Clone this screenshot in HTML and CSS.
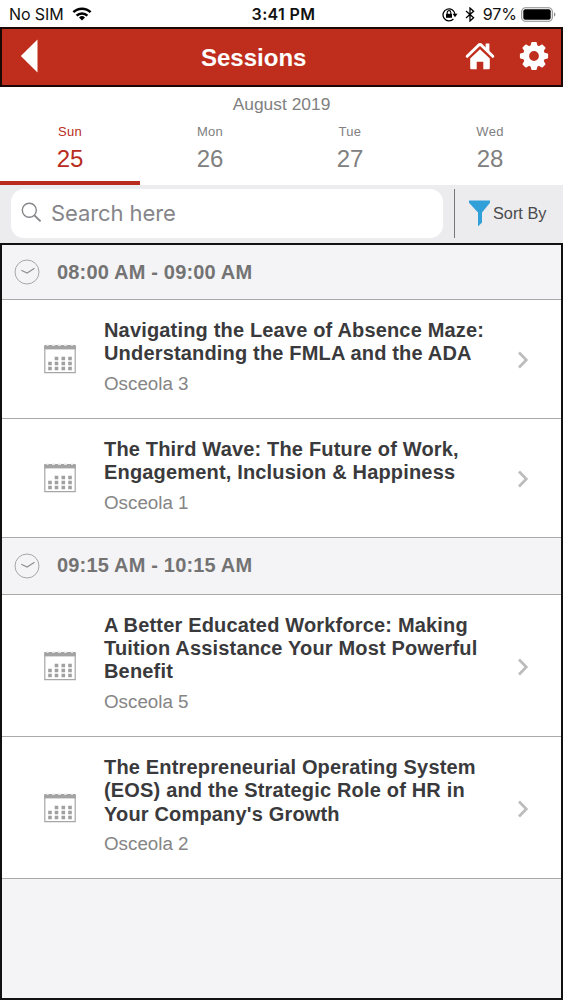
FILE: index.html
```html
<!DOCTYPE html>
<html lang="en">
<head>
    <meta charset="UTF-8">
    <meta name="viewport" content="width=device-width, initial-scale=1.0">
    <title>Sessions</title>
    <link rel="stylesheet" href="styles.css">
</head>
<body>
    <!-- shared icons -->
    <svg class="hidden">
        <symbol id="icon-clock" viewBox="0 0 26 26">
            <circle cx="13" cy="13" r="12" fill="none" stroke="#a6a6a6" stroke-width="1"/>
            <path d="M7.3 11.2l5.8 2.8 7.4-4.8" fill="none" stroke="#8f8f8f" stroke-width="1.2"/>
        </symbol>
        <symbol id="icon-calendar" viewBox="0 0 32 30">
            <path d="M.8 2v26.7h30.4V2" fill="none" stroke="#a6a6a6" stroke-width="1.2"/>
            <path d="M.3 1h31.4v4.4H.3z" fill="#a3a3a3"/>
            <path d="M2.5 1.2h2M8 1.2h3M14 1.2h3M20 1.2h3M27 1.2h2" stroke="#e4e4e4" stroke-width="1.6"/>
            <path d="M10.7 12.7h3.6v3.6h-3.6zM17.5 12.7h3.6v3.6h-3.6zM24.2 12.7h3.6v3.6h-3.6zM4.2 17.7h3.6v3.6H4.2zM10.7 17.7h3.6v3.6h-3.6zM17.5 17.7h3.6v3.6h-3.6zM24.2 17.7h3.6v3.6h-3.6zM4.2 22.7h3.6v3.6H4.2zM10.7 22.7h3.6v3.6h-3.6zM17.5 22.7h3.6v3.6h-3.6zM24.2 22.7h3.6v3.6h-3.6z" fill="#a0a0a0"/>
        </symbol>
        <symbol id="icon-arrow" viewBox="0 0 12 18">
            <path d="M2 1.5L9.3 9 2 16.5" fill="none" stroke="#bcbcbc" stroke-width="2.7"/>
        </symbol>
    </svg>

    <div class="statusbar">
        <div class="carrier">
            <span>No SIM</span>
            <svg width="20" height="14" viewBox="0 0 20 14">
                <g fill="none" stroke="#000" stroke-width="2.5">
                    <path d="M1.4 5.2a12.2 12.2 0 0 1 17.2 0"/>
                    <path d="M4.6 8.6a7.7 7.7 0 0 1 10.8 0"/>
                </g>
                <path d="M10 13.6l-3-3.1a4.3 4.3 0 0 1 6 0z"/>
            </svg>
        </div>
        <div class="time">3:41 PM</div>
        <div class="status-right">
            <svg class="lock" width="16" height="15" viewBox="0 0 16 15">
                <path d="M11.4 12A6 6 0 1 1 13 7.2" fill="none" stroke="#000" stroke-width="1.3"/>
                <path d="M10.6 6.8h4.9L13 10.2z"/>
                <path d="M4 6.8h6v4H4z"/>
                <path d="M5.2 7V5.4a1.8 1.8 0 0 1 3.6 0V7" fill="none" stroke="#000" stroke-width="1.1"/>
            </svg>
            <svg class="bluetooth" width="10" height="15" viewBox="0 0 10 15">
                <path d="M1 4l7.6 6.8L5 14V1l3.6 3.2L1 11" fill="none" stroke="#000" stroke-width="1.3"/>
            </svg>
            <span>97%</span>
            <svg class="battery" width="35" height="15" viewBox="0 0 35 15">
                <rect x=".7" y=".7" width="30.6" height="13.6" rx="3.8" fill="none" stroke="#8a8a8a" stroke-width="1.1"/>
                <rect x="2.3" y="2.3" width="27.4" height="10.4" rx="2"/>
                <path d="M33 5.2a2.6 2.6 0 0 1 0 4.6z" fill="#8a8a8a"/>
            </svg>
        </div>
    </div>

    <div class="navbar">
        <svg class="back" width="18" height="34" viewBox="0 0 18 34">
            <path d="M17.5 .5v33L.8 17z" fill="#fff"/>
        </svg>
        <div class="title">Sessions</div>
        <div class="menu">
            <svg width="30" height="28" viewBox="0 0 30 28">
                <path d="M2.2 14.3L13.6 3.2q1.4-1.2 2.8 0l11.4 11.1" fill="none" stroke="#fff" stroke-width="3" stroke-linecap="round" stroke-linejoin="round"/>
                <path d="M20.6 1.6h3.8v9l-3.8-3.6z" fill="#fff"/>
                <path d="M15 7.2l9.8 9.4V26q0 1.3-1.3 1.3h-5.2v-7.6h-6.6v7.6H6.5q-1.3 0-1.3-1.3v-9.4z" fill="#fff"/>
            </svg>
            <svg width="30" height="30" viewBox="-15 -15 30 30">
                <g fill="#fff">
                    <path id="tooth" d="M-3.8-9l1.2-4.5q.2-.6.8-.6h3.6q.6 0 .8.6L3.8-9z"/>
                    <use href="#tooth" transform="rotate(45)"/>
                    <use href="#tooth" transform="rotate(90)"/>
                    <use href="#tooth" transform="rotate(135)"/>
                    <use href="#tooth" transform="rotate(180)"/>
                    <use href="#tooth" transform="rotate(225)"/>
                    <use href="#tooth" transform="rotate(270)"/>
                    <use href="#tooth" transform="rotate(315)"/>
                </g>
                <circle r="7.9" fill="none" stroke="#fff" stroke-width="6"/>
            </svg>
        </div>
    </div>

    <div class="calendar">
        <div class="month">August 2019</div>
        <div class="days">
            <div class="day active"><span>Sun</span><b>25</b></div>
            <div class="day"><span>Mon</span><b>26</b></div>
            <div class="day"><span>Tue</span><b>27</b></div>
            <div class="day"><span>Wed</span><b>28</b></div>
        </div>
    </div>

    <div class="toolbar">
        <div class="search">
            <svg width="21" height="21" viewBox="0 0 21 21">
                <circle cx="8.3" cy="8.3" r="7" fill="none" stroke="#85858a" stroke-width="1.4"/>
                <path d="M13.4 13.4l6.2 6" stroke="#85858a" stroke-width="1.9"/>
            </svg>
            <span>Search here</span>
        </div>
        <div class="sort">
            <svg width="21" height="27" viewBox="0 0 21 27">
                <path d="M0 .5h21v2.3l-8 9.7v10l-4 4V12.5L0 2.8z" fill="#32a0d8"/>
            </svg>
            <span>Sort By</span>
        </div>
    </div>

    <div class="sessions">
        <div class="slot">
            <svg width="26" height="26"><use href="#icon-clock"/></svg>
            <span>08:00 AM - 09:00 AM</span>
        </div>
        <div class="session">
            <svg class="cal" width="32" height="30"><use href="#icon-calendar"/></svg>
            <div class="info">
                <div class="name">Navigating the Leave of Absence Maze:<br>Understanding the FMLA and the ADA</div>
                <div class="room">Osceola 3</div>
            </div>
            <svg class="arrow" width="12" height="18"><use href="#icon-arrow"/></svg>
        </div>
        <div class="session">
            <svg class="cal" width="32" height="30"><use href="#icon-calendar"/></svg>
            <div class="info">
                <div class="name">The Third Wave: The Future of Work,<br>Engagement, Inclusion &amp; Happiness</div>
                <div class="room">Osceola 1</div>
            </div>
            <svg class="arrow" width="12" height="18"><use href="#icon-arrow"/></svg>
        </div>
        <div class="slot">
            <svg width="26" height="26"><use href="#icon-clock"/></svg>
            <span>09:15 AM - 10:15 AM</span>
        </div>
        <div class="session">
            <svg class="cal" width="32" height="30"><use href="#icon-calendar"/></svg>
            <div class="info">
                <div class="name">A Better Educated Workforce: Making<br>Tuition Assistance Your Most Powerful<br>Benefit</div>
                <div class="room">Osceola 5</div>
            </div>
            <svg class="arrow" width="12" height="18"><use href="#icon-arrow"/></svg>
        </div>
        <div class="session">
            <svg class="cal" width="32" height="30"><use href="#icon-calendar"/></svg>
            <div class="info">
                <div class="name">The Entrepreneurial Operating System<br>(EOS) and the Strategic Role of HR in<br>Your Company's Growth</div>
                <div class="room">Osceola 2</div>
            </div>
            <svg class="arrow" width="12" height="18"><use href="#icon-arrow"/></svg>
        </div>
    </div>
</body>
</html>
```
FILE: styles.css
```css
/* General styles */
* {
    box-sizing: border-box;
}

body {
    font-family: "Liberation Sans", Arial, sans-serif;
    margin: 0;
    height: 1000px;
    display: flex;
    flex-direction: column;
    background-color: #fff;
    overflow: hidden;
    white-space: nowrap;
}

svg {
    display: block;
    flex-shrink: 0;
}

.hidden {
    display: none;
}

/* Status bar */
.statusbar {
    height: 27px;
    flex-shrink: 0;
    display: grid;
    grid-template-columns: 1fr auto 1fr;
    align-items: center;
    padding: 1px 7px 0 9px;
    font-family: Inter, sans-serif;
    font-size: 16px;
    color: #111;
}

.carrier {
    display: flex;
    align-items: center;
    gap: 8px;
    letter-spacing: -0.1px;
}

.time {
    font-weight: 600;
    letter-spacing: 0.35px;
    padding-left: 2px;
}

.status-right {
    display: flex;
    align-items: center;
    justify-content: flex-end;
}

.lock {
    margin-right: 7px;
}

.bluetooth {
    margin-right: 8px;
}

.battery {
    margin-left: 4px;
}

/* Header */
.navbar {
    height: 60px;
    flex-shrink: 0;
    display: grid;
    grid-template-columns: 181px auto 1fr;
    align-items: center;
    padding: 0 12px 2px 18px;
    background-color: #bf2e1d;
    border: 2px solid #1a0805;
    color: #fff;
}

.navbar .title {
    font-size: 24px;
    font-weight: bold;
    padding-top: 4px;
}

.navbar .menu {
    display: flex;
    align-items: center;
    justify-content: flex-end;
    gap: 24px;
}

/* Date picker */
.calendar {
    height: 98px;
    flex-shrink: 0;
    padding-top: 7px;
    color: #808080;
    text-align: center;
    display: flex;
    flex-direction: column;
}

.month {
    font-size: 17.4px;
    line-height: 20px;
}

.days {
    display: grid;
    grid-template-columns: repeat(4, 140px);
    flex: 1;
}

.day {
    display: flex;
    flex-direction: column;
    padding-top: 10px;
    border-bottom: 4px solid transparent;
}

.day span {
    font-size: 13px;
    line-height: 16px;
    letter-spacing: 0.3px;
}

.day b {
    font-size: 24px;
    font-weight: normal;
    line-height: 28px;
    margin-top: 5px;
}

.day.active {
    color: #b92c1d;
    border-color: #b92c1d;
}

/* Search and sort */
.toolbar {
    height: 58px;
    flex-shrink: 0;
    display: flex;
    padding: 4px 0 5px 11px;
    background-color: #ececee;
}

.search {
    width: 432px;
    display: flex;
    align-items: center;
    gap: 9px;
    padding: 0 0 2px 10px;
    background-color: #fff;
    border-radius: 13px;
    font-family: Inter, sans-serif;
    font-size: 22px;
    letter-spacing: -0.1px;
    color: #85858a;
}

.sort {
    flex: 1;
    display: flex;
    align-items: center;
    gap: 3px;
    margin-left: 11px;
    padding-left: 14px;
    border-left: 1px solid #77777a;
    font-size: 16.3px;
    color: #4a4a4c;
}

/* Session list */
.sessions {
    flex: 1;
    border: 2px solid #111;
    background-color: #f4f4f6;
}

.slot {
    height: 55px;
    display: flex;
    align-items: center;
    gap: 17px;
    padding-left: 12px;
    border-bottom: 1px solid #a9a9a9;
    font-size: 20px;
    font-weight: bold;
    letter-spacing: 0.18px;
    color: #737373;
}

.session ~ .slot {
    height: 57px;
}

.session {
    display: flex;
    align-items: center;
    padding: 19px 32px 22px 42px;
    border-bottom: 1px solid #a9a9a9;
    background-color: #fff;
}

.cal {
    margin: 4px 28px 0 0;
}

.arrow {
    margin-top: 6px;
}

.info {
    flex: 1;
}

.name {
    font-size: 20px;
    font-weight: bold;
    line-height: 23.4px;
    letter-spacing: 0.17px;
    color: #3a3a3c;
}

.room {
    margin-top: 6px;
    font-size: 18.8px;
    line-height: 24px;
    color: #858585;
}
```
